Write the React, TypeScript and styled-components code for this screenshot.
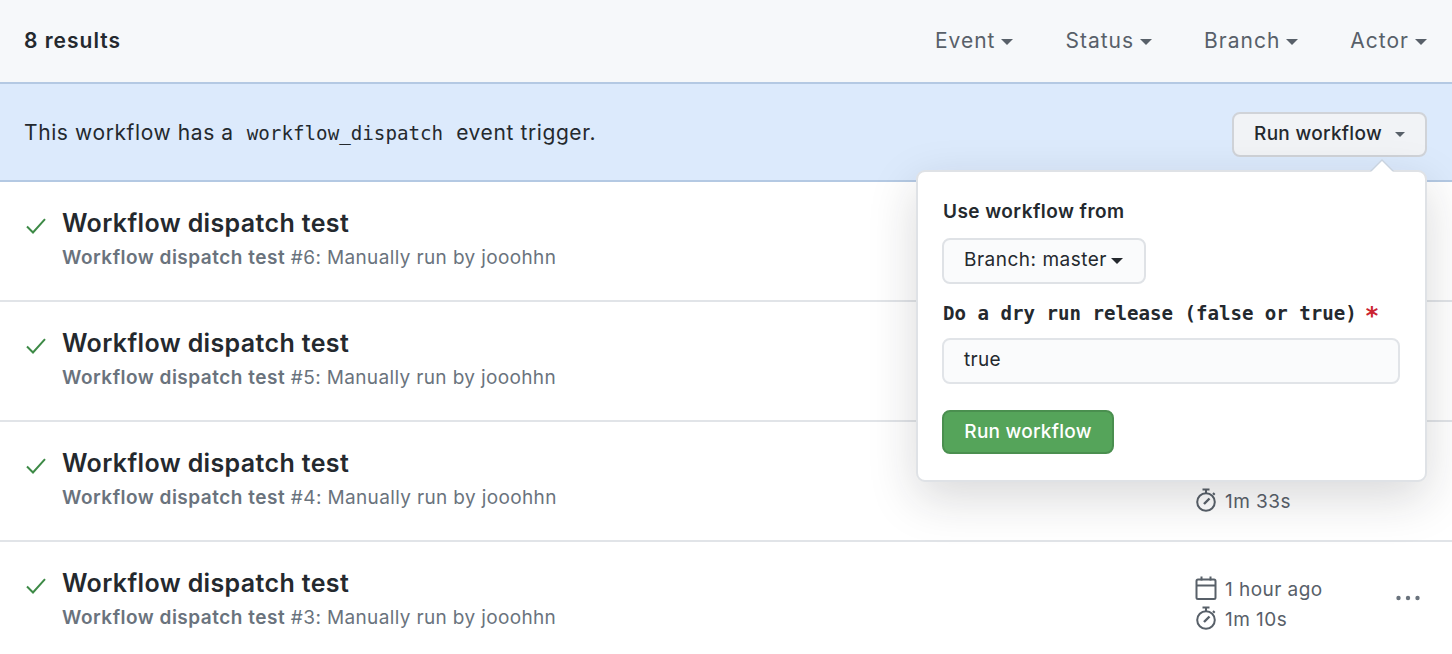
import React from 'react';
import styled, { createGlobalStyle } from 'styled-components';

const GlobalStyle = createGlobalStyle`
  html, body {
    margin: 0;
    padding: 0;
    background: #fff;
    overflow: hidden;
  }
  body {
    font-family: Inter, "Liberation Sans", sans-serif;
    color: #24292e;
  }
`;

const Page = styled.div`
  position: relative;
  width: 1452px;
  height: 654px;
  overflow: hidden;
`;

const Header = styled.header`
  height: 80px;
  padding: 0 25px 2px 24px;
  display: flex;
  align-items: center;
  justify-content: space-between;
  background: #f6f8fa;
  border-bottom: 2px solid #b4c9e3;
`;

const ResultCount = styled.h2`
  margin: 0;
  font-size: 21px;
  font-weight: 600;
  letter-spacing: 1px;
`;

const Filters = styled.nav`
  display: flex;
  gap: 52px;
`;

const Filter = styled.span`
  display: flex;
  align-items: center;
  gap: 6px;
  font-size: 21px;
  letter-spacing: 1px;
  color: #586069;
`;

const Caret = styled.i<{ $color?: string; $size?: number }>`
  display: inline-block;
  width: 0;
  height: 0;
  margin-top: 3px;
  border-style: solid;
  border-width: ${(p) => p.$size ?? 6.5}px ${(p) => p.$size ?? 6.5}px 0;
  border-color: ${(p) => p.$color ?? '#586069'} transparent transparent;
`;

const Banner = styled.section`
  height: 96px;
  display: flex;
  align-items: center;
  justify-content: space-between;
  padding: 0 25px 0 24px;
  background: #dceafc;
  border-bottom: 2px solid #b4c9e3;
`;

const BannerText = styled.p`
  margin: 0;
  font-size: 21px;
  letter-spacing: 0.6px;
`;

const Code = styled.code`
  margin: 0 13px;
  font-family: "DejaVu Sans Mono", "Liberation Mono", monospace;
  font-size: 19.2px;
  letter-spacing: 0;
`;

const DispatchWrap = styled.div`
  position: relative;
  margin-top: 4px;
`;

const SummaryButton = styled.button`
  width: 195px;
  height: 45px;
  display: flex;
  align-items: center;
  justify-content: center;
  gap: 13px;
  padding: 0 0 2px;
  font: 500 19px Inter, sans-serif;
  letter-spacing: 0.3px;
  color: #24292e;
  background: #f1f3f6;
  border: 2px solid #d0d3d8;
  border-radius: 8px;
`;

const Popover = styled.div`
  position: absolute;
  top: 58px;
  right: 0;
  width: 511px;
  height: 312px;
  box-sizing: border-box;
  padding: 28px 25px 0 24px;
  background: #fff;
  border: 2px solid #dfe2e6;
  border-radius: 9px;
  box-shadow: 0 16px 48px rgba(27, 31, 35, 0.17);

  &::before,
  &::after {
    content: '';
    position: absolute;
    right: 31px;
    width: 0;
    height: 0;
    border-style: solid;
    border-width: 0 12px 12px;
  }
  &::before {
    top: -13px;
    border-color: transparent transparent #c9d3df;
  }
  &::after {
    top: -11px;
    border-color: transparent transparent #fff;
  }
`;

const FieldLabel = styled.div`
  font-size: 19px;
  font-weight: 600;
  letter-spacing: 0.45px;
  line-height: 24px;
  padding-left: 1px;
`;

const BranchButton = styled.button`
  width: 204px;
  height: 46px;
  margin-top: 14px;
  display: flex;
  align-items: center;
  gap: 4px;
  padding: 0 0 3px 20px;
  font: 400 19px Inter, sans-serif;
  letter-spacing: 0.5px;
  color: #24292e;
  background: #fafbfc;
  border: 2px solid #dfe2e6;
  border-radius: 8px;
`;

const MonoLabel = styled.div`
  margin-top: 18px;
  padding-left: 1px;
  font-family: "DejaVu Sans Mono", "Liberation Mono", monospace;
  font-size: 19.1px;
  font-weight: 700;
  line-height: 24px;
  white-space: nowrap;
`;

const Required = styled.span`
  margin-left: 8px;
  font-size: 24px;
  line-height: 20px;
  vertical-align: -4px;
  color: #cb2431;
`;

const TextField = styled.div`
  height: 46px;
  margin-top: 12px;
  box-sizing: border-box;
  display: flex;
  align-items: center;
  padding: 0 0 2px 20px;
  font-size: 19px;
  letter-spacing: 0.3px;
  background: #fafbfc;
  border: 2px solid #e1e4e8;
  border-radius: 8px;
`;

const SubmitButton = styled.button`
  display: block;
  width: 172px;
  height: 44px;
  margin-top: 26px;
  padding: 0;
  font: 500 19px Inter, sans-serif;
  letter-spacing: 0.25px;
  color: #fff;
  background: #55a45a;
  border: 2px solid #4a8f4f;
  border-radius: 8px;
`;

const RunList = styled.ul`
  margin: 0;
  padding: 0;
  list-style: none;
`;

const RunRow = styled.li`
  height: 118px;
  display: flex;
  padding: 0 0 0 26px;
  border-bottom: 2px solid #e1e4e8;
`;

const StatusIcon = styled.svg`
  width: 20px;
  height: 16px;
  margin-top: 36px;
  flex: none;
  color: #3d8a46;
`;

const RunInfo = styled.div`
  margin-left: 16px;
  padding-top: 26px;
  flex: 1;
`;

const RunTitle = styled.div`
  font-size: 25px;
  font-weight: 600;
  letter-spacing: 0.36px;
  line-height: 30px;
`;

const RunMeta = styled.div`
  margin-top: 7px;
  font-size: 19px;
  letter-spacing: 0.36px;
  line-height: 26px;
  color: #6a737d;

  strong {
    font-weight: 600;
    letter-spacing: 0.5px;
  }
`;

const RunSide = styled.div<{ $top: number }>`
  width: 258px;
  padding-top: ${(p) => p.$top}px;
  flex: none;
  display: flex;
  flex-direction: column;
  gap: 4px;
`;

const SideLine = styled.div`
  display: flex;
  align-items: center;
  gap: 7px;
  height: 26px;
  font-size: 19px;
  letter-spacing: 0.45px;
  color: #586069;

  svg {
    width: 24px;
    height: 24px;
    margin-top: -2px;
    flex: none;
  }
`;

const MoreDots = styled.svg`
  position: absolute;
  right: 32px;
  top: 595px;
  width: 24px;
  height: 6px;
  color: #6a737d;
`;

const CalendarIcon = () => (
  <svg viewBox="0 0 24 24" fill="none" stroke="currentColor" strokeWidth="2">
    <rect x="2.5" y="3.5" width="19" height="19.5" rx="1.5" />
    <path d="M2.5 9.5h19M7.5 0.5v4M16.5 0.5v4" />
  </svg>
);

const TimerIcon = () => (
  <svg viewBox="0 0 24 24" fill="none" stroke="currentColor" strokeWidth="2">
    <circle cx="12" cy="14" r="8.8" />
    <path d="M8.5 1.5h7M12 2v3M19 5l1.7 1.7" />
    <path d="M10 16L15.5 10.5" strokeWidth="2.4" />
  </svg>
);

const runs = [
  { id: 6, top: 34, side: [] as string[] },
  { id: 5, top: 34, side: [] as string[] },
  { id: 4, top: 36, side: ['', '1m 33s'] },
  { id: 3, top: 34, side: ['1 hour ago', '1m 10s'] },
];

export default function App() {
  return (
    <Page>
      <GlobalStyle />
      <Header>
        <ResultCount>8 results</ResultCount>
        <Filters>
          {['Event', 'Status', 'Branch', 'Actor'].map((name) => (
            <Filter key={name}>
              {name}
              <Caret />
            </Filter>
          ))}
        </Filters>
      </Header>
      <Banner>
        <BannerText>
          This workflow has a<Code>workflow_dispatch</Code>event trigger.
        </BannerText>
        <DispatchWrap>
          <SummaryButton>
            Run workflow
            <Caret $size={5} />
          </SummaryButton>
          <Popover>
            <FieldLabel>Use workflow from</FieldLabel>
            <BranchButton>
              Branch: master
              <Caret $color="#24292e" />
            </BranchButton>
            <MonoLabel>
              Do a dry run release (false or true)<Required>*</Required>
            </MonoLabel>
            <TextField>true</TextField>
            <SubmitButton>Run workflow</SubmitButton>
          </Popover>
        </DispatchWrap>
      </Banner>
      <RunList>
        {runs.map((run) => (
          <RunRow key={run.id}>
            <StatusIcon viewBox="0 0 20 16" fill="none" stroke="currentColor" strokeWidth="2">
              <path d="M1 8.5L7 14.5L19 1.2" />
            </StatusIcon>
            <RunInfo>
              <RunTitle>Workflow dispatch test</RunTitle>
              <RunMeta>
                <strong>Workflow dispatch test</strong> #{run.id}: Manually run by jooohhn
              </RunMeta>
            </RunInfo>
            <RunSide $top={run.top}>
              {run.side.map((text, i) =>
                text ? (
                  <SideLine key={i}>
                    {i === 0 ? <CalendarIcon /> : <TimerIcon />}
                    {text}
                  </SideLine>
                ) : (
                  <SideLine key={i} />
                )
              )}
            </RunSide>
          </RunRow>
        ))}
      </RunList>
      <MoreDots viewBox="0 0 24 6" fill="currentColor">
        <circle cx="2.5" cy="3" r="2.2" />
        <circle cx="12" cy="3" r="2.2" />
        <circle cx="21.5" cy="3" r="2.2" />
      </MoreDots>
    </Page>
  );
}
